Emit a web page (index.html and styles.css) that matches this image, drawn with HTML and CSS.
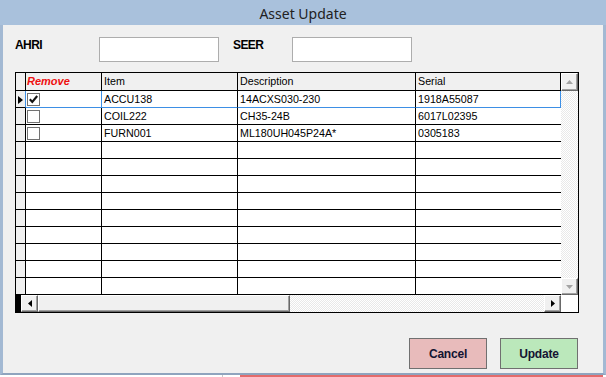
FILE: index.html
```html
<!DOCTYPE html>
<html lang="en">
<head>
    <meta charset="UTF-8">
    <title>Asset Update</title>
    <link rel="stylesheet" href="styles.css">
</head>
<body>
<div class="window">
    <div class="titlebar">Asset Update</div>

    <div class="frame">
        <!-- AHRI / SEER inputs -->
        <div class="fields">
            <label class="field-label label-ahri">AHRI</label>
            <input class="field-input" type="text">
            <label class="field-label label-seer">SEER</label>
            <input class="field-input" type="text">
        </div>

        <!-- Asset grid -->
        <div class="grid">
            <div class="vscroll">
                <div class="sbtn sbtn-up"><svg width="7" height="4"><polygon points="0,4 3.5,0 7,4" fill="#a3a3a3"/></svg></div>
                <div class="track"></div>
                <div class="sbtn"><svg width="7" height="4"><polygon points="0,0 3.5,4 7,0" fill="#a3a3a3"/></svg></div>
            </div>

            <div class="cell hcell rowhead"></div>
            <div class="cell hcell hcell-remove">Remove</div>
            <div class="cell hcell">Item</div>
            <div class="cell hcell">Description</div>
            <div class="cell hcell">Serial</div>

            <div class="cell rowhead focus-side"><span class="row-arrow"></span></div>
            <div class="cell check-cell focus focus-side"><span class="checkbox"><svg width="11" height="11"><polyline points="1.8,5.3 4.3,8 9.2,2" fill="none" stroke="#141414" stroke-width="2.1"/></svg></span></div>
            <div class="cell focus">ACCU138</div>
            <div class="cell focus">14ACXS030-230</div>
            <div class="cell focus focus-side">1918A55087</div>

            <div class="cell rowhead"></div>
            <div class="cell check-cell"><span class="checkbox"></span></div>
            <div class="cell">COIL222</div>
            <div class="cell">CH35-24B</div>
            <div class="cell c-last">6017L02395</div>

            <div class="cell rowhead"></div>
            <div class="cell check-cell"><span class="checkbox"></span></div>
            <div class="cell">FURN001</div>
            <div class="cell">ML180UH045P24A*</div>
            <div class="cell c-last">0305183</div>

            <div class="cell rowhead"></div><div class="cell"></div><div class="cell"></div><div class="cell"></div><div class="cell c-last"></div>
            <div class="cell rowhead"></div><div class="cell"></div><div class="cell"></div><div class="cell"></div><div class="cell c-last"></div>
            <div class="cell rowhead"></div><div class="cell"></div><div class="cell"></div><div class="cell"></div><div class="cell c-last"></div>
            <div class="cell rowhead"></div><div class="cell"></div><div class="cell"></div><div class="cell"></div><div class="cell c-last"></div>
            <div class="cell rowhead"></div><div class="cell"></div><div class="cell"></div><div class="cell"></div><div class="cell c-last"></div>
            <div class="cell rowhead"></div><div class="cell"></div><div class="cell"></div><div class="cell"></div><div class="cell c-last"></div>
            <div class="cell rowhead"></div><div class="cell"></div><div class="cell"></div><div class="cell"></div><div class="cell c-last"></div>
            <div class="cell rowhead"></div><div class="cell"></div><div class="cell"></div><div class="cell"></div><div class="cell c-last"></div>
            <div class="cell rowhead"></div><div class="cell"></div><div class="cell"></div><div class="cell"></div><div class="cell c-last"></div>

            <div class="hscroll">
                <div class="hs-block"></div>
                <div class="sbtn"><svg width="4" height="7"><polygon points="4,0 0,3.5 4,7" fill="#000"/></svg></div>
                <div class="sbtn thumb"></div>
                <div class="track"></div>
                <div class="sbtn"><svg width="4" height="7"><polygon points="0,0 4,3.5 0,7" fill="#000"/></svg></div>
            </div>
            <div class="corner"></div>
        </div>

        <div class="actions">
            <button class="btn btn-cancel">Cancel</button>
            <button class="btn btn-update">Update</button>
        </div>
    </div>

    <!-- bit of the window behind -->
    <div class="backstrip">
        <div class="back-white"></div>
        <div class="back-red"></div>
    </div>
</div>
</body>
</html>
```

FILE: styles.css
```css
body {
    margin: 0;
    background: #fff;
    font-family: "Liberation Sans", Arial, sans-serif;
}

.window {
    width: 606px;
    height: 377px;
    display: flex;
    flex-direction: column;
    overflow: hidden;
}

.titlebar {
    height: 25px;
    flex: none;
    background: #a9c1dc;
    color: #222;
    font: 14px/27px "Noto Sans", sans-serif;
    text-align: center;
    overflow: hidden;
}

.frame {
    flex: 1;
    display: flex;
    flex-direction: column;
    background: #f0f0f0;
    border-left: 3px solid #a3b9d3;
    border-right: 3px solid #a3b9d3;
    border-bottom: 2px solid #8fa4be;
}

/* Inputs row */
.fields {
    display: flex;
    align-items: flex-start;
    margin: 12px 0 0 12px;
}

.field-label {
    font-size: 12px;
    font-weight: bold;
    letter-spacing: -0.6px;
    line-height: 13px;
    margin-top: 2px;
    color: #000;
}

.label-ahri {
    width: 84px;
}

.label-seer {
    width: 59px;
    margin-left: 14px;
}

.field-input {
    width: 120px;
    height: 25px;
    box-sizing: border-box;
    margin: 0;
    padding: 0;
    border: 1px solid #adadad;
    background: #fff;
}

/* Grid */
.grid {
    width: 564px;
    height: 241px;
    box-sizing: border-box;
    margin: 10px 0 0 12px;
    border: 1px solid #000;
    background: #fff;
    display: grid;
    grid-template-columns: 10px 76px 136px 178px 145px 17px;
    grid-template-rows: 18px repeat(12, 17px) 17px;
}

.cell {
    box-sizing: border-box;
    border-right: 1px solid #000;
    border-bottom: 1px solid #000;
    padding-left: 2px;
    font-size: 10.7px;
    line-height: 16px;
    color: #000;
    white-space: nowrap;
    overflow: hidden;
}

.hcell {
    background: #f0f0f0;
    line-height: 17px;
}

.hcell-remove {
    padding-left: 1px;
    color: #ee1111;
    font-weight: bold;
    font-style: italic;
    font-size: 11px;
}

.rowhead {
    background: #f0f0f0;
    padding-left: 2px;
}

.c-last {
    border-right: none;
}

.focus {
    border-bottom-color: #3d8fe5;
}

.focus-side {
    border-right-color: #3d8fe5;
}

.row-arrow {
    display: block;
    width: 0;
    height: 0;
    margin-top: 5px;
    border-left: 5px solid #000;
    border-top: 4px solid transparent;
    border-bottom: 4px solid transparent;
}

.check-cell {
    padding-left: 1px;
}

.checkbox {
    display: block;
    width: 13px;
    height: 13px;
    box-sizing: border-box;
    margin-top: 2px;
    border: 1px solid #727272;
    background: #fff;
}

.checkbox svg {
    display: block;
}

/* Scrollbars */
.vscroll {
    grid-column: 6;
    grid-row: 1 / span 13;
    display: flex;
    flex-direction: column;
}

.hscroll {
    grid-column: 1 / span 5;
    grid-row: 14;
    display: flex;
}

.corner {
    grid-column: 6;
    grid-row: 14;
    background: #fff;
}

.hs-block {
    width: 5px;
    background: #000;
}

.sbtn {
    width: 17px;
    height: 17px;
    flex: none;
    box-sizing: border-box;
    background: #f0f0f0;
    border-top: 1px solid #fff;
    border-left: 1px solid #fff;
    border-right: 1px solid #696969;
    border-bottom: 1px solid #696969;
    box-shadow: inset -1px -1px #a0a0a0;
    display: flex;
    align-items: center;
    justify-content: center;
}

.sbtn svg {
    display: block;
}

.sbtn-up {
    height: 18px;
}

.thumb {
    width: 252px;
}

.track {
    flex: 1;
    background: repeating-conic-gradient(#fff 0 25%, #e9e9e9 0 50%) 0 0 / 2px 2px;
}

/* Buttons */
.actions {
    display: flex;
    justify-content: flex-end;
    gap: 13px;
    margin-top: 25px;
    padding-right: 25px;
}

.btn {
    width: 78px;
    height: 31px;
    padding: 0;
    border: 1px solid #707070;
    font-family: "Liberation Sans", Arial, sans-serif;
    font-size: 12px;
    font-weight: bold;
    letter-spacing: -0.2px;
    color: #141432;
}

.btn-cancel {
    background: #e8bbbb;
}

.btn-update {
    background: #bbe8bb;
}

.backstrip {
    height: 2px;
    flex: none;
    display: flex;
}

.back-white {
    width: 240px;
    background: #fff;
    border-left: 222px solid #fff;
    box-sizing: border-box;
    box-shadow: inset 1px 0 #c8c8c8;
}

.back-red {
    flex: 1;
    background: #e36b6b;
    margin-right: 3px;
}
```
